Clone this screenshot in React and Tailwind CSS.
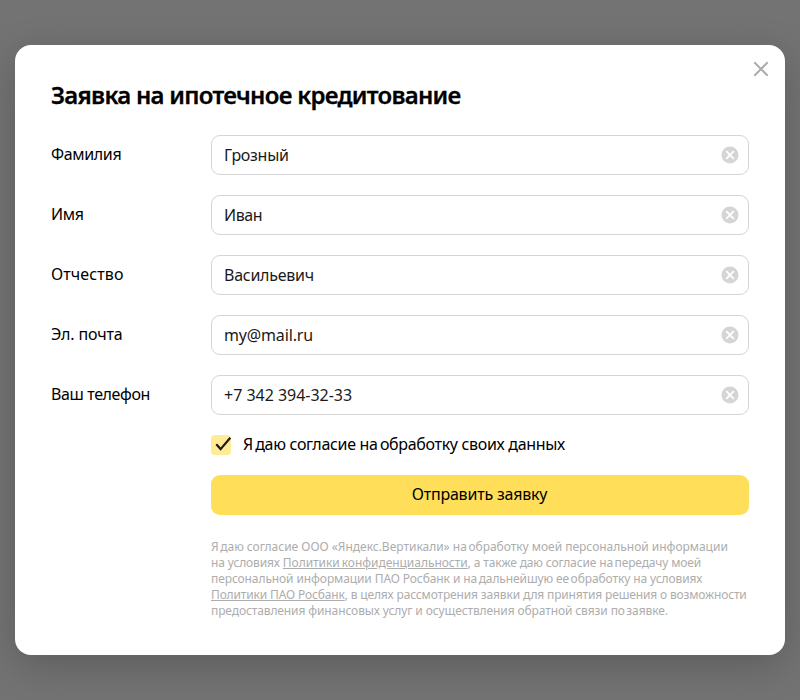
const fields = [
  { label: 'Фамилия', value: 'Грозный', labelTracking: 'tracking-[-0.35px]', valueTracking: 'tracking-[-0.28px]' },
  { label: 'Имя', value: 'Иван', labelTracking: 'tracking-[-0.3px]', valueTracking: 'tracking-[-0.4px]' },
  { label: 'Отчество', value: 'Васильевич', labelTracking: 'tracking-[0.1px]', valueTracking: 'tracking-[-0.25px]' },
  { label: 'Эл. почта', value: 'my@mail.ru', labelTracking: 'tracking-[-0.15px]', valueTracking: 'tracking-[-0.15px]' },
  { label: 'Ваш телефон', value: '+7 342 394-32-33', labelTracking: 'tracking-[-0.38px]', valueTracking: 'tracking-[-0.02px]' },
];

function ClearIcon() {
  return (
    <svg className="size-[18px] shrink-0" viewBox="0 0 18 18" fill="none">
      <circle cx="9" cy="9" r="8.5" fill="#d5d5d5" />
      <path d="M5.2 5.2l7.6 7.6M12.8 5.2l-7.6 7.6" stroke="#fff" strokeWidth="1.9" />
    </svg>
  );
}

function Field({ label, value, labelTracking, valueTracking }) {
  return (
    <div className="flex h-10">
      <div className={`w-40 shrink-0 text-base leading-[38px] whitespace-nowrap ${labelTracking}`}>{label}</div>
      <div className="flex flex-1 items-center justify-between rounded-[9px] border border-[#d5d5d5] pr-[9px] pl-3">
        <span className={`text-base leading-[38px] whitespace-nowrap text-[#1a1a1a] ${valueTracking}`}>{value}</span>
        <ClearIcon />
      </div>
    </div>
  );
}

function Tight({ children }) {
  return <span className="[word-spacing:-1.5px]">{children}</span>;
}

export default function App() {
  return (
    <div className="flex h-[700px] w-[800px] items-center justify-center overflow-hidden bg-[#737373] font-['Noto_Sans',sans-serif] text-black">
      <div className="relative h-[610px] w-[770px] rounded-2xl bg-white px-9 pt-[35px] shadow-[0_10px_40px_rgba(0,0,0,0.2)]">
        <button className="absolute top-4 right-4 size-4" aria-label="Закрыть">
          <svg className="size-4" viewBox="0 0 16 16" fill="none">
            <path d="M1.3 1.3l13.4 13.4M14.7 1.3L1.3 14.7" stroke="#adadad" strokeWidth="2" />
          </svg>
        </button>
        <h1 className="h-[30px] text-2xl leading-[30px] font-semibold tracking-[-0.73px] whitespace-nowrap [-webkit-text-stroke:0.3px_black]">
          Заявка на ипотечное кредитование
        </h1>
        <div className="mt-[25px] flex flex-col gap-5">
          {fields.map((field) => (
            <Field key={field.label} {...field} />
          ))}
        </div>
        <div className="mt-5 ml-40">
          <label className="flex h-5 items-center gap-3">
            <span className="size-5 shrink-0 rounded-[4px] bg-[#ffeb94]">
              <svg className="size-5 overflow-visible" viewBox="0 0 20 20" fill="none">
                <path d="M5.3 9.2l4.3 4.9L19.3 2.7" stroke="#1a1a1a" strokeWidth="2.2" />
              </svg>
            </span>
            <span className="pb-0.5 text-base leading-[18px] tracking-[-0.32px] whitespace-nowrap">
              <Tight>Я даю</Tight> согласие <Tight>на обработку</Tight> своих данных
            </span>
          </label>
          <button className="mt-5 flex h-10 w-full items-center justify-center rounded-[9px] bg-[#ffde5a] pr-px pb-0.5 text-base tracking-[-0.2px] whitespace-nowrap">
            Отправить заявку
          </button>
          <p className="mt-6 text-xs leading-4 whitespace-nowrap text-[#adadad]">
            <span className="block tracking-[-0.02px]">
              <Tight>Я даю</Tight> согласие ООО «Яндекс.Вертикали» <Tight>на обработку</Tight> моей персональной информации
            </span>
            <span className="block tracking-[-0.13px]">
              на условиях <a className="tracking-[-0.05px] underline [word-spacing:-1px]">Политики конфиденциальности</a>, а также даю согласие <Tight>на передачу</Tight> моей
            </span>
            <span className="block tracking-[-0.1px]">
              персональной информации ПАО Росбанк и <Tight>на дальнейшую</Tight> <Tight>ее обработку</Tight> на условиях
            </span>
            <span className="block tracking-[-0.15px]">
              <a className="underline">Политики ПАО Росбанк</a>, в целях рассмотрения заявки для принятия решения о возможности
            </span>
            <span className="block tracking-[-0.11px]">
              предоставления финансовых услуг и осуществления обратной связи <Tight>по заявке.</Tight>
            </span>
          </p>
        </div>
      </div>
    </div>
  );
}
